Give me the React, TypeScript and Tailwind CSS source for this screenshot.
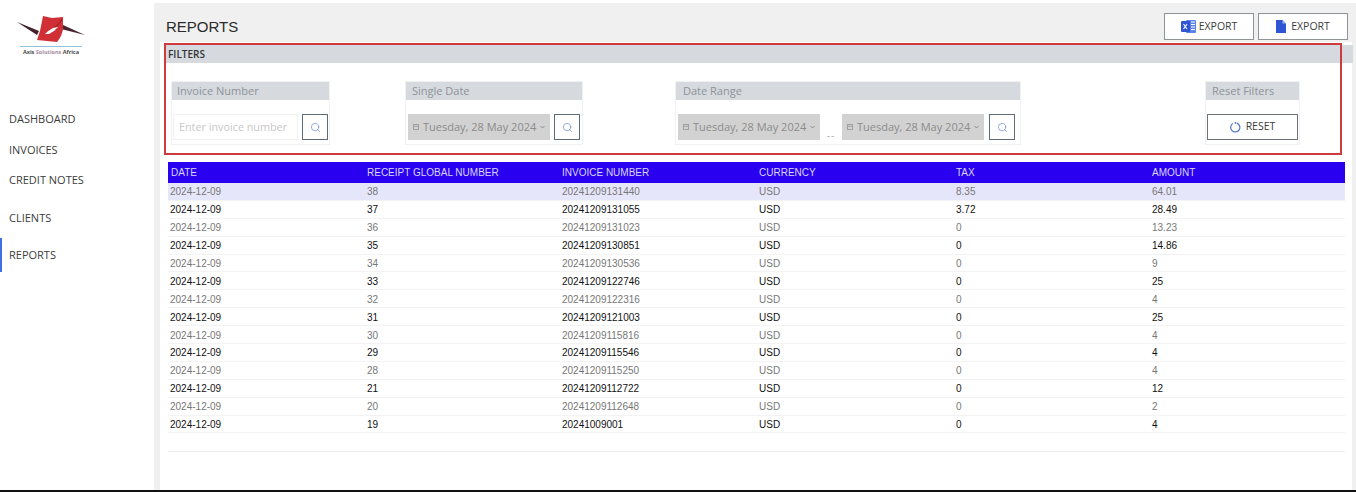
import React from "react";
import { Search } from "lucide-react";

const rows = [
  ["38", "20241209131440", "8.35", "64.01"],
  ["37", "20241209131055", "3.72", "28.49"],
  ["36", "20241209131023", "0", "13.23"],
  ["35", "20241209130851", "0", "14.86"],
  ["34", "20241209130536", "0", "9"],
  ["33", "20241209122746", "0", "25"],
  ["32", "20241209122316", "0", "4"],
  ["31", "20241209121003", "0", "25"],
  ["30", "20241209115816", "0", "4"],
  ["29", "20241209115546", "0", "4"],
  ["28", "20241209115250", "0", "4"],
  ["21", "20241209112722", "0", "12"],
  ["20", "20241209112648", "0", "2"],
  ["19", "20241009001", "0", "4"],
];
const heads = ["DATE", "RECEIPT GLOBAL NUMBER", "INVOICE NUMBER", "CURRENCY", "TAX", "AMOUNT"];

function Logo() {
  return (
    <div className="flex flex-col items-center w-[70px] ml-[16px]">
      <svg width="70" height="28" viewBox="0 0 70 28" className="block">
        <path d="M1 7 L23 16 L21 20 Z" fill="#43202a" />
        <path d="M69 20 L47 10 L45 14 Z" fill="#4a2530" />
        <path d="M27 1 L36 3 L47 2 L47 14 Q46 21 41 27 L21 25 L24 16 Z" fill="#cf2f35" />
        <path d="M29 19 Q33 15 37 13 L42 12 Q38 17 33 19 Z" fill="#fff" />
        <path d="M46 4 Q44 9 39 12" fill="none" stroke="#8a1c22" strokeWidth="1" />
      </svg>
      <div className="w-[62px] h-px bg-[#8fc3dc] mt-[3px] shrink-0" />
      <div className="text-[5.500px] leading-[10px] font-bold font-['Open_Sans',sans-serif] text-[#4a4a4a] whitespace-nowrap">
        Axis <span className="text-[#a88aa0]">Solutions</span> Africa
      </div>
    </div>
  );
}

function Sidebar() {
  const cls = "pl-[9px] text-[11px] leading-[16px] text-[#3c3c3c]";
  return (
    <aside className="w-[154px] shrink-0 bg-white flex flex-col font-['Open_Sans',sans-serif]">
      <div className="pt-[15px] h-[111px]"><Logo /></div>
      <div className={cls}>DASHBOARD</div>
      <div className={cls + " mt-[15px]"}>INVOICES</div>
      <div className={cls + " mt-[14px]"}>CREDIT NOTES</div>
      <div className={cls + " mt-[22px]"}>CLIENTS</div>
      <div className="mt-[12px] border-l-2 border-[#3f6fe0] h-[34px] flex items-center pl-[7px] text-[11px] text-[#3c3c3c]">REPORTS</div>
    </aside>
  );
}

function SearchBtn() {
  return (
    <button className="w-[26px] h-[26px] border border-[#5f6b75] bg-white flex items-center justify-center shrink-0">
      <Search size={11} strokeWidth={1.4} className="text-[#5f80c8]" />
    </button>
  );
}

function DateBox() {
  return (
    <div className="w-[142px] h-[26px] bg-[#d2d2d2] flex items-center pl-[5px] text-[#8c8c8c] text-[11px] whitespace-nowrap shrink-0">
      <svg width="6" height="6" viewBox="0 0 6 6" className="mr-[4px] shrink-0"><rect x="0.5" y="0.5" width="5" height="5" fill="none" stroke="#a0a0a0" /><path d="M0 2.300H6" stroke="#a0a0a0" /></svg>
      Tuesday, 28 May 2024
      <svg width="5" height="4" viewBox="0 0 5 4" className="ml-[4px]"><path d="M0.500 1 L2.500 3 L4.500 1" fill="none" stroke="#8c8c8c" /></svg>
    </div>
  );
}

function Group({ title, w, ml, pl, children }: { title: string; w: string; ml: string; pl: string; children: React.ReactNode }) {
  return (
    <div className={`${w} ${ml} h-[64px] border border-[#f0f1f2] flex flex-col shrink-0`}>
      <div className={`h-[18px] bg-[#d6dade] ${pl} text-[11px] leading-[18px] text-[#8d9298] shrink-0`}>{title}</div>
      <div className="flex items-start pt-[14px] px-[1px]">{children}</div>
    </div>
  );
}

export default function App() {
  const cols = "grid grid-cols-[197px_195px_197px_197px_196px_1fr]";
  return (
    <div className="h-[492px] w-[1356px] overflow-hidden bg-white flex flex-col">
      <div className="flex h-[490px]">
        <Sidebar />
        <main className="flex-1 mt-[3px] bg-[#f0f0f0] relative flex flex-col pl-[6px] font-['Open_Sans',sans-serif]">
          <div className="h-[39px] shrink-0 flex items-start justify-between pr-[8px] -ml-[6px]">
            <h1 className="ml-[12px] mt-[14px] text-[15px] leading-[20px] text-[#2b2b2b] font-['Liberation_Sans',sans-serif]">REPORTS</h1>
            <div className="flex gap-[4px] mt-[10px]">
              <button className="w-[90px] h-[27px] border border-[#8f9498] bg-white flex items-center justify-center gap-[3px] text-[10.500px] text-[#3c3c3c]">
                <svg width="15" height="15" viewBox="0 0 15 15"><rect x="5" y="1" width="10" height="13" rx="1" fill="#5b82e6" /><path d="M10 3H14M10 5.500H14M10 8H14M10 10.500H14" stroke="#fff" strokeWidth="1" /><rect x="0" y="2" width="9" height="11" rx="1" fill="#2f55d4" /><path d="M2.500 5L6 10M6 5L2.500 10" stroke="#fff" strokeWidth="1.100" /></svg>
                EXPORT
              </button>
              <button className="w-[90px] h-[27px] border border-[#8f9498] bg-white flex items-center justify-center gap-[5px] text-[10.500px] text-[#3c3c3c]">
                <svg width="10" height="13" viewBox="0 0 10 13"><path d="M0 0H6.500L10 3.500V13H0Z" fill="#2f55d4" /><path d="M6.500 0V3.500H10Z" fill="#9db3ee" /></svg>
                EXPORT
              </button>
            </div>
          </div>

          <div className="flex-1 bg-white mr-[4px] flex flex-col min-h-0">
            <div className="ml-[5px] mr-[-1px]">
              <div className="h-[18px] mt-[3px] bg-[#d6dade] pl-[3px] text-[10px] leading-[18px] text-[#333] font-semibold">FILTERS</div>
            </div>
            <div className="flex mt-[18px] ml-[11px]">
              <Group title="Invoice Number" w="w-[159px]" ml="ml-[0px]" pl="pl-[5px]">
                <div className="w-[127px] h-[26px] border border-[#f1f1f1] mr-[4px] pl-[5px] text-[10.800px] leading-[24px] text-[#c8c8c8] whitespace-nowrap overflow-hidden">Enter invoice number</div>
                <SearchBtn />
              </Group>
              <Group title="Single Date" w="w-[178px]" ml="ml-[75px]" pl="pl-[6px]">
                <span className="w-[1px]" />
                <DateBox />
                <span className="w-[4px]" />
                <SearchBtn />
              </Group>
              <Group title="Date Range" w="w-[346px]" ml="ml-[92px]" pl="pl-[7px]">
                <span className="w-[1px]" />
                <DateBox />
                <span className="w-[22px] h-[26px] flex items-end justify-center text-[10px] tracking-[1px] text-[#aaa] leading-[10px]">--</span>
                <DateBox />
                <span className="w-[5px]" />
                <SearchBtn />
              </Group>
              <Group title="Reset Filters" w="w-[95px]" ml="ml-[184px]" pl="pl-[6px]">
                <button className="w-[91px] h-[26px] border border-[#6d7378] flex items-center justify-center gap-[5px] text-[10.500px] text-[#3c3c3c]">
                  <svg width="11" height="11" viewBox="0 0 12 12"><path d="M7.500 1.200A5 5 0 1 1 3 1.700" fill="none" stroke="#4d77c9" strokeWidth="1.300" /><circle cx="6" cy="1" r="1" fill="#4d77c9" /></svg>
                  RESET
                </button>
              </Group>
            </div>

            <div className="ml-[8px] mr-[7px] mt-[17px] font-['Liberation_Sans',sans-serif] text-[10px]">
              <div className={`${cols} h-[21px] bg-[#2a00f0] text-[#d9d6ff] items-center pl-[2px]`}>
                {heads.map((h, i) => <div key={h} className={i === 0 ? "pl-[1px]" : ""}>{h}</div>)}
              </div>
              {rows.map((r, i) => (
                <div
                  key={r[0]}
                  className={`${cols} h-[17.900px] items-center pl-[2px] pt-[1px] border-b border-[#f3f3f3] ${i === 0 ? "bg-[#e6e6fa]" : ""} ${i % 2 === 0 ? "text-[#777]" : "text-[#111]"}`}
                >
                  <div>2024-12-09</div>
                  <div>{r[0]}</div>
                  <div>{r[1]}</div>
                  <div>USD</div>
                  <div>{r[2]}</div>
                  <div>{r[3]}</div>
                </div>
              ))}
              <div className="h-[19px] border-b border-[#f0f0f0]" />
            </div>
          </div>

          <div className="absolute left-[10px] right-[14px] top-[40px] h-[112px] border-2 border-[#cf3a3f] pointer-events-none" />
        </main>
      </div>
      <div className="h-[2px] bg-[#111]" />
    </div>
  );
}
